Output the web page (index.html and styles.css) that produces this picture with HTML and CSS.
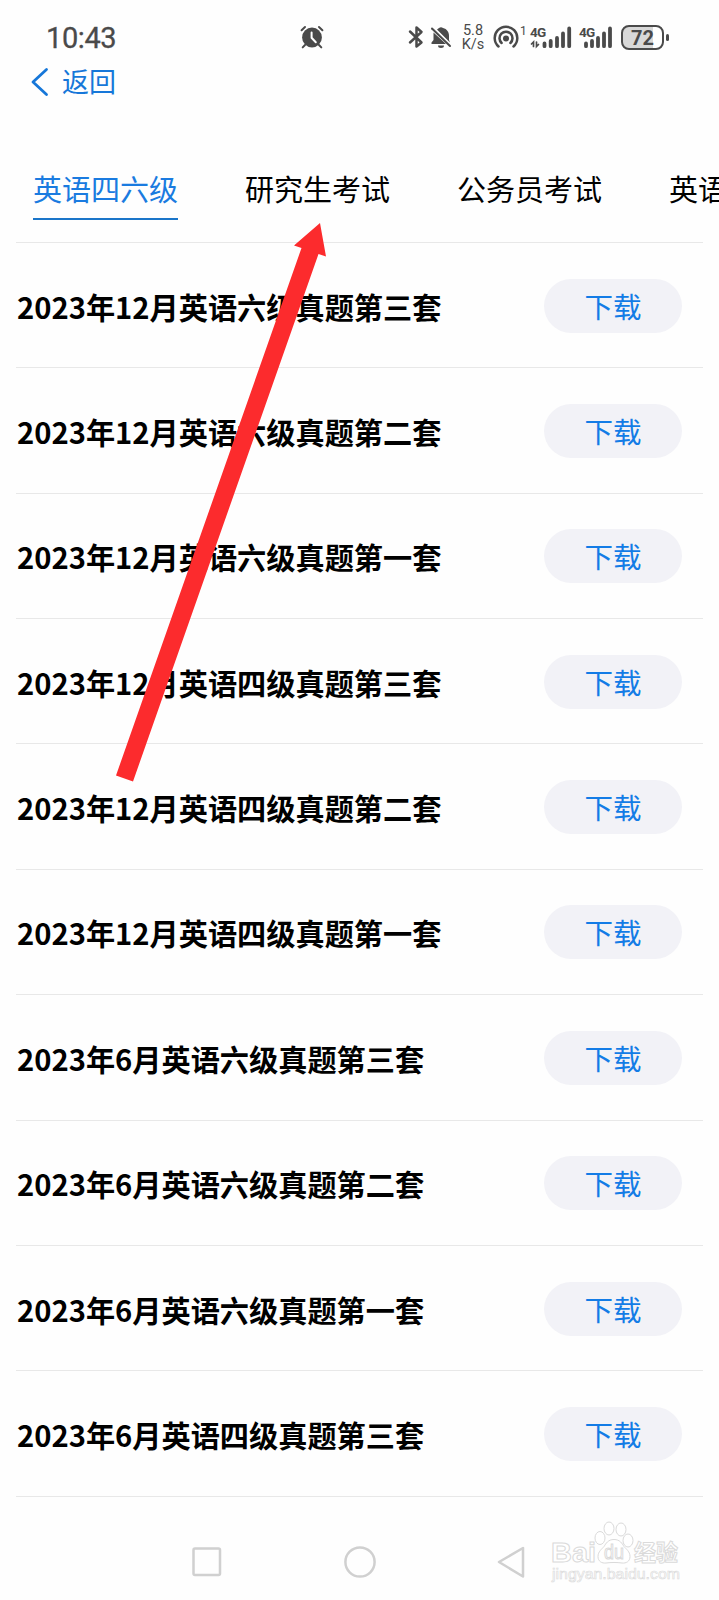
FILE: index.html
```html
<!DOCTYPE html>
<html lang="zh-CN">
<head>
<meta charset="utf-8">
<title>真题下载</title>
<link rel="stylesheet" href="styles.css">
</head>
<body>
<div class="screen">
  <header class="status">
    <span class="clock">10:43</span>
    <svg class="alarm" width="24" height="24" viewBox="0 0 24 24" fill="none" stroke="#4a4a4a" stroke-width="2" stroke-linecap="round"><circle cx="12" cy="12.5" r="9.9" fill="#4a4a4a" stroke="none"/><path d="M1.6 5.2 5 2M22.4 5.2 19 2M5 20l-2.3 2.4M19 20l2.3 2.4"/><path d="M11.6 7.5v5.3l4.2 4.4" stroke="#fff"/></svg>
    <div class="indicators">
      <svg class="bt" width="17" height="24" viewBox="0 0 17 24" fill="none" stroke="#4a4a4a" stroke-width="2.5" stroke-linejoin="round" stroke-linecap="round"><path d="M2 6.500 13.500 17.500 8.500 21.500v-19L13.500 7 2 17.500"/></svg>
      <svg class="bell" width="22" height="24" viewBox="0 0 22 24"><path d="M7 4.500 9 3a3 2.500 0 0 1 4 0c4 1 6 4 6 8v4l1 2.500ZM3.500 7.500 16 19H1.500v-1.500L3.500 15Z" fill="#4a4a4a"/><path d="M8 20.500h6a3 2.500 0 0 1-6 0Z" fill="#4a4a4a"/><path d="M2 3.500 20 21" stroke="#4a4a4a" stroke-width="2" stroke-linecap="round"/></svg>
      <div class="speed"><span>5.8</span><span>K/s</span></div>
      <svg class="hotspot" width="26" height="24" viewBox="0 0 26 24" fill="none" stroke="#4a4a4a" stroke-width="2.500" stroke-linecap="round"><circle cx="13" cy="13.500" r="3" fill="#4a4a4a" stroke="none"/><path d="M5.500 21.500a11.300 11.300 0 1 1 15 0M8.600 18a6.500 6.500 0 1 1 8.800 0"/></svg>
      <span class="one">1</span>
      <div class="signal first"><span>4G</span>
        <svg width="42" height="24" viewBox="0 0 42 24" fill="none" stroke="#4a4a4a" stroke-linecap="round"><path d="M3.500 21.500v-4.500l-2 2M6.500 17v4.500l2-2" stroke-width="1.700"/><path d="M14.500 18.500v2.700M20.700 16v5.200M27 13v8.200M33 8.500v12.700M39.200 3.500v17.700" stroke-width="3.800"/></svg>
      </div>
      <div class="signal second"><span>4G</span>
        <svg width="34" height="24" viewBox="0 0 34 24" fill="none" stroke="#4a4a4a" stroke-linecap="round"><path d="M7 18.500v2.700M13 16v5.200M19 13v8.200M25 8.500v12.700M31 3.500v17.700" stroke-width="3.800"/></svg>
      </div>
      <div class="battery"><span>72</span></div><i class="tip"></i>
    </div>
  </header>

  <nav class="back">
    <svg width="18" height="30" viewBox="0 0 18 30" fill="none" stroke="#1677d9" stroke-width="2.800" stroke-linecap="round" stroke-linejoin="round"><path d="M15.500 2.500 2 15l13.500 12.500"/></svg>
    <span>返回</span>
  </nav>

  <div class="tabs">
    <span class="tab active">英语四六级</span><span class="tab">研究生考试</span><span class="tab">公务员考试</span><span class="tab">英语</span>
  </div>

  <main class="list">
    <div class="row"><span>2023年12月英语六级真题第三套</span><span class="btn">下载</span></div>
    <div class="row"><span>2023年12月英语六级真题第二套</span><span class="btn">下载</span></div>
    <div class="row"><span>2023年12月英语六级真题第一套</span><span class="btn">下载</span></div>
    <div class="row"><span>2023年12月英语四级真题第三套</span><span class="btn">下载</span></div>
    <div class="row"><span>2023年12月英语四级真题第二套</span><span class="btn">下载</span></div>
    <div class="row"><span>2023年12月英语四级真题第一套</span><span class="btn">下载</span></div>
    <div class="row"><span>2023年6月英语六级真题第三套</span><span class="btn">下载</span></div>
    <div class="row"><span>2023年6月英语六级真题第二套</span><span class="btn">下载</span></div>
    <div class="row"><span>2023年6月英语六级真题第一套</span><span class="btn">下载</span></div>
    <div class="row"><span>2023年6月英语四级真题第三套</span><span class="btn">下载</span></div>
  </main>

  <footer class="sysnav">
    <svg width="30" height="30" viewBox="0 0 30 30" fill="none" stroke="#d0d0d0" stroke-width="2.500"><rect x="1.500" y="1.500" width="26.500" height="26.500" rx="1.500"/></svg>
    <svg width="32" height="32" viewBox="0 0 32 32" fill="none" stroke="#d0d0d0" stroke-width="2.500"><circle cx="16" cy="16" r="14.600"/></svg>
    <svg width="28" height="32" viewBox="0 0 28 32" fill="none" stroke="#d0d0d0" stroke-width="2.500" stroke-linejoin="round"><path d="M26 2v28.500L2 16Z"/></svg>
  </footer>

  <svg class="arrow" width="719" height="800" viewBox="0 0 719 800"><path d="M320 223 326 256.500 318.500 254 133 781.500 116 775.500 301.500 248 294 245.500Z" fill="#fc2b2d"/></svg>

  <svg class="watermark" width="136" height="70" viewBox="0 0 136 70" fill="#fff" stroke="#dadada" stroke-width="1">
    <ellipse cx="54" cy="18" rx="5" ry="6.500"/><ellipse cx="63" cy="8.500" rx="5" ry="6.500"/><ellipse cx="75" cy="9.500" rx="5" ry="6.500"/><ellipse cx="82" cy="20.500" rx="5" ry="6.500"/>
    <path d="M68 19.500c-6 0-8 4-10 7-2 2.500-6 5-6 10 0 5 4 7 8 6.500 5-.7 11-.7 16 0 4 .5 8-1.500 8-6.500s-4-7.500-6-10c-2-3-4-7-10-7Z"/>
    <text class="wm-brand" x="5" y="42" textLength="45" lengthAdjust="spacingAndGlyphs">Bai</text>
    <text class="wm-du" x="58" y="39" textLength="20" lengthAdjust="spacingAndGlyphs">du</text>
    <text class="wm-cn" x="88" y="41" textLength="44" lengthAdjust="spacingAndGlyphs">经验</text>
    <text class="wm-url" x="6" y="59" textLength="128" lengthAdjust="spacingAndGlyphs">jingyan.baidu.com</text>
  </svg>
</div>
</body>
</html>
```
FILE: styles.css
```css
* { box-sizing: border-box; }
body { margin: 0; background: #fefefe; font-family: "Noto Sans CJK SC", sans-serif; color: #000; }
.screen { position: relative; width: 719px; height: 1600px; overflow: hidden; display: flex; flex-direction: column; }
svg { display: block; flex: none; }

.status { height: 60px; padding: 25px 47px 0 46px; display: flex; align-items: flex-start; color: #4a4a4a; font-family: Roboto, sans-serif; flex: none; }
.clock { width: 254px; font-size: 29px; line-height: 27px; letter-spacing: -0.4px; -webkit-text-stroke: .3px #4a4a4a; }
.alarm { flex: none; }
.indicators { display: flex; align-items: flex-start; margin-left: 84px; }
.bell { margin-left: 5px; }
.speed { display: flex; flex-direction: column; width: 24px; margin: -1px 0 0 9px; font-size: 14.500px; line-height: 13.500px; text-align: center; }
.hotspot { margin-left: 8px; }
.one { width: 8px; font-size: 12px; line-height: 12px; margin-left: 1px; }
.signal { position: relative; display: flex; }
.signal span { position: absolute; left: 0; top: 0; font-size: 13.500px; line-height: 14px; font-weight: 700; letter-spacing: -0.8px; }
.first { margin-left: 2px; }
.second { margin-left: 7px; }
.battery { width: 43px; height: 25px; margin-left: 8px; border: 2px solid #4a4a4a; border-radius: 8px; background: linear-gradient(90deg, #d8d8d8 76%, #fff 76%); text-align: center; font-size: 20px; font-weight: 700; line-height: 22px; flex: none; }
.tip { width: 3px; height: 7px; margin: 9px 0 0 2px; border-radius: 2px; background: #4a4a4a; }

.back { height: 44px; padding-left: 31px; display: flex; align-items: center; color: #1677d9; font-size: 27px; line-height: 40px; flex: none; }
.back span { margin: -2px 0 0 13px; }

.tabs { height: 138px; padding: 64px 0 0 33px; display: flex; align-items: flex-start; gap: 67px; overflow: hidden; white-space: nowrap; flex: none; }
.tab { height: 52px; font-size: 29px; line-height: 40px; flex: none; border-bottom: 2px solid transparent; }
.active { color: #1a7be0; border-color: #1a75c9; }

.list { margin: 0 16px; border-top: 1px solid #e8e8e8; display: grid; grid-auto-rows: 125.37px; flex: none; }
.row { display: flex; align-items: center; justify-content: space-between; padding: 1px 21px 0 1px; border-bottom: 1px solid #e8e8e8; font-size: 29.2px; font-weight: 700; line-height: 40px; white-space: nowrap; }
.btn { width: 138px; height: 54px; border-radius: 27px; background: #f2f2f7; color: #137ce6; font-size: 28.500px; font-weight: 400; line-height: 53px; text-align: center; }

.sysnav { margin-top: 47px; padding: 0 194px 0 192px; height: 36px; display: flex; align-items: center; justify-content: space-between; }

.arrow { position: absolute; left: 0; top: 0; }
.watermark { position: absolute; right: 37px; bottom: 10px; }
.wm-brand { font: 700 28px "Liberation Sans", sans-serif; }
.wm-du { font: 20px "Liberation Sans", sans-serif; }
.wm-cn { font: 700 23px "Noto Sans CJK SC", sans-serif; }
.wm-url { font: 15px "Liberation Sans", sans-serif; stroke-width: .6px; }
```
